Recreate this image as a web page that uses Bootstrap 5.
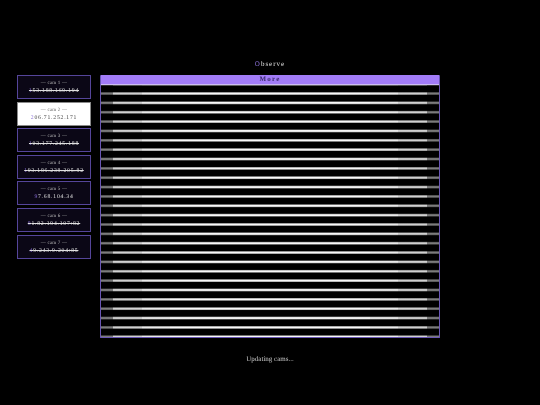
<!DOCTYPE html>
<html lang="en">
<head>
<meta charset="utf-8">
<title>Observe</title>
<link href="https://cdn.jsdelivr.net/npm/bootstrap@5.3.0/dist/css/bootstrap.min.css" rel="stylesheet">
<style>
html,body{background:#000;margin:0;height:405px;overflow:hidden}
.obs-page{font-family:"Liberation Serif","Times New Roman",serif;color:#ddd;padding:58px 100px 0 17px;text-rendering:geometricPrecision;filter:blur(.25px)}
.obs-title{font-size:7px;letter-spacing:1px;line-height:12px;height:17px;color:#e0e0e0;text-align:center;padding-left:83px;margin-right:-100px;padding-right:100px}
.obs-accent{color:#8a70d8}
.obs-main{gap:9px}
.obs-side{width:74px;gap:2.6px}
.obs-cam{height:24px;border:1px solid #55459a;background:#0b0716;color:#e0e0e0;font-size:5.7px;line-height:8px;letter-spacing:.78px;text-align:center;padding-top:4px}
.obs-cam small{display:block;font-size:5px;line-height:7px;letter-spacing:.2px;color:#bbb}
.obs-cam.obs-on{background:#fff;color:#3c3c3c;border-color:#8a8a8a}
.obs-cam.obs-on small{color:#5c5c5c}
.obs-view{width:340px;height:263px;margin-right:-100px;border:1px solid #6a57b4;border-top:0;border-radius:1px;background:#000}
.obs-more{height:10px;background:#a27cf8;border-bottom:1px solid #cdbcf4;color:#3a2b6c;font-size:7px;font-weight:700;line-height:9px;letter-spacing:1.2px;text-align:center}
.obs-lines{height:252px;position:relative;background:repeating-linear-gradient(180deg,#c4c4c4 0,#000 1px,#000 6.7px,#8c8c8c 7.4px,#f8f8f8 8.1px,#f8f8f8 8.9px,#c4c4c4 9.355px)}
.obs-lines::after{content:"";position:absolute;inset:0;background:linear-gradient(90deg,rgba(0,0,0,.5) 0,rgba(0,0,0,.5) 12px,rgba(0,0,0,.16) 12px,rgba(0,0,0,.16) 41px,rgba(0,0,0,.06) 41px,rgba(0,0,0,.06) 69px,rgba(0,0,0,0) 69px,rgba(0,0,0,0) 269px,rgba(0,0,0,.06) 269px,rgba(0,0,0,.06) 297px,rgba(0,0,0,.16) 297px,rgba(0,0,0,.16) 326px,rgba(0,0,0,.5) 326px)}
.obs-status{font-size:7px;line-height:10px;color:#c8c8c8;text-align:center;padding-left:83px;margin-right:-100px;padding-right:100px;margin-top:16px}
</style>
</head>
<body>
<div class="obs-page">
  <div class="obs-title"><span class="obs-accent">O</span>bserve</div>
  <div class="d-flex obs-main">
    <div class="d-flex flex-column obs-side">
      <div class="obs-cam"><small>— cam 1 —</small><s><span class="obs-accent">1</span>53.188.169.194</s></div>
      <div class="obs-cam obs-on"><small>— cam 2 —</small><span class="obs-accent">2</span>06.71.252.171</div>
      <div class="obs-cam"><small>— cam 3 —</small><s><span class="obs-accent">1</span>03.177.245.188</s></div>
      <div class="obs-cam"><small>— cam 4 —</small><s><span class="obs-accent">1</span>93.186.238.205.82</s></div>
      <div class="obs-cam"><small>— cam 5 —</small><span class="obs-accent">9</span>7.68.104.34</div>
      <div class="obs-cam"><small>— cam 6 —</small><s><span class="obs-accent">8</span>1.82.194.107:82</s></div>
      <div class="obs-cam"><small>— cam 7 —</small><s><span class="obs-accent">4</span>9.243.9.204:85</s></div>
    </div>
    <div class="obs-view">
      <div class="obs-more">More</div>
      <div class="obs-lines"></div>
    </div>
  </div>
  <div class="obs-status">Updating cams...</div>
</div>
<script src="https://cdn.jsdelivr.net/npm/bootstrap@5.3.0/dist/js/bootstrap.bundle.min.js"></script>
</body>
</html>
